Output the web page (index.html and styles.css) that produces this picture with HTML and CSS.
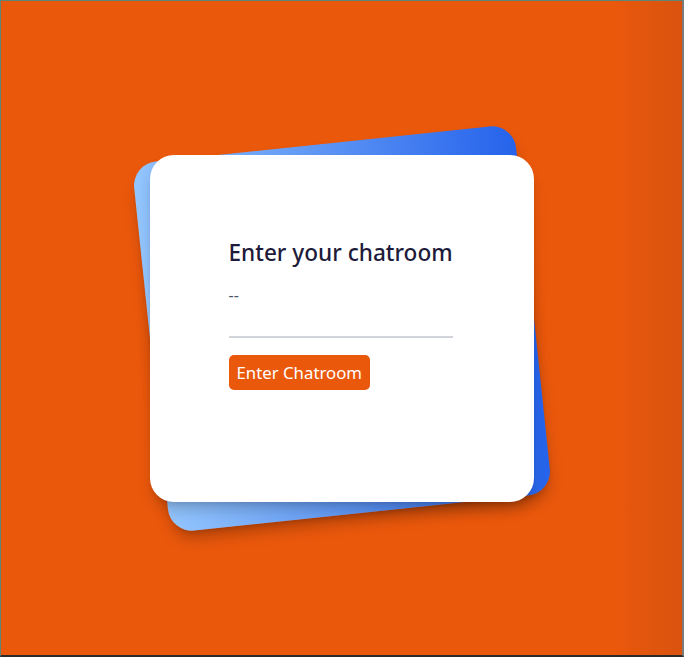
FILE: index.html
```html
<!DOCTYPE html>
<html lang="en">
<head>
<meta charset="utf-8">
<title>Chatroom</title>
<link rel="stylesheet" href="styles.css">
</head>
<body>
<div class="frame">
  <div class="stack">
    <div class="backdrop"></div>
    <div class="card">
      <h1 class="title">Enter your chatroom</h1>
      <p class="hint">--</p>
      <input class="field" type="text" aria-label="Chatroom">
      <button class="btn" type="button">Enter Chatroom</button>
    </div>
  </div>
</div>
</body>
</html>
```

FILE: styles.css
```css
html, body {
  margin: 0;
  padding: 0;
  height: 100%;
}
body {
  font-family: "Noto Sans", "Open Sans", sans-serif;
}
.frame {
  box-sizing: border-box;
  height: 657px;
  width: 684px;
  border-top: 1px solid #5f8578;
  border-left: 1px solid #5f8578;
  border-right: 2px solid #7a7a7a;
  border-bottom: 2px solid #2b2b2b;
  background: linear-gradient(to right, #ea580c 0%, #ea580c 90%, #d9530f 100%);
  display: flex;
  align-items: center;
  justify-content: center;
}
.stack {
  position: relative;
  width: 384px;
  padding: 12px 0;
}
.backdrop {
  position: absolute;
  inset: 0;
  border-radius: 24px;
  background: linear-gradient(to right, #93c5fd, #2563eb);
  transform: rotate(-6deg);
  box-shadow: 0 10px 15px -3px rgba(0,0,0,0.25), 0 4px 6px -4px rgba(0,0,0,0.2);
}
.card {
  position: relative;
  box-sizing: border-box;
  height: 347px;
  padding: 80px 80px 80px 79px;
  background: #fff;
  border-radius: 24px;
  box-shadow: 0 10px 15px -3px rgba(0,0,0,0.2), 0 4px 6px -4px rgba(0,0,0,0.15);
  display: flex;
  flex-direction: column;
  align-items: flex-start;
}
.title {
  margin: 2px 0 0;
  font-size: 22.6px;
  line-height: 32px;
  font-weight: 500;
  color: #1e1b3a;
  white-space: nowrap;
}
.hint {
  margin: 14px 0 0;
  font-size: 16px;
  line-height: 24px;
  color: #4b5563;
}
.field {
  box-sizing: border-box;
  width: 224px;
  height: 31px;
  border: none;
  border-bottom: 2px solid #d1d5db;
  outline: none;
  background: transparent;
  padding: 0;
  font: inherit;
}
.btn {
  margin-top: 17px;
  height: 35px;
  padding: 0 8px;
  border: none;
  border-radius: 5px;
  background: #ea580c;
  color: #fff;
  font-family: inherit;
  font-size: 16.8px;
  line-height: 35px;
}
```
